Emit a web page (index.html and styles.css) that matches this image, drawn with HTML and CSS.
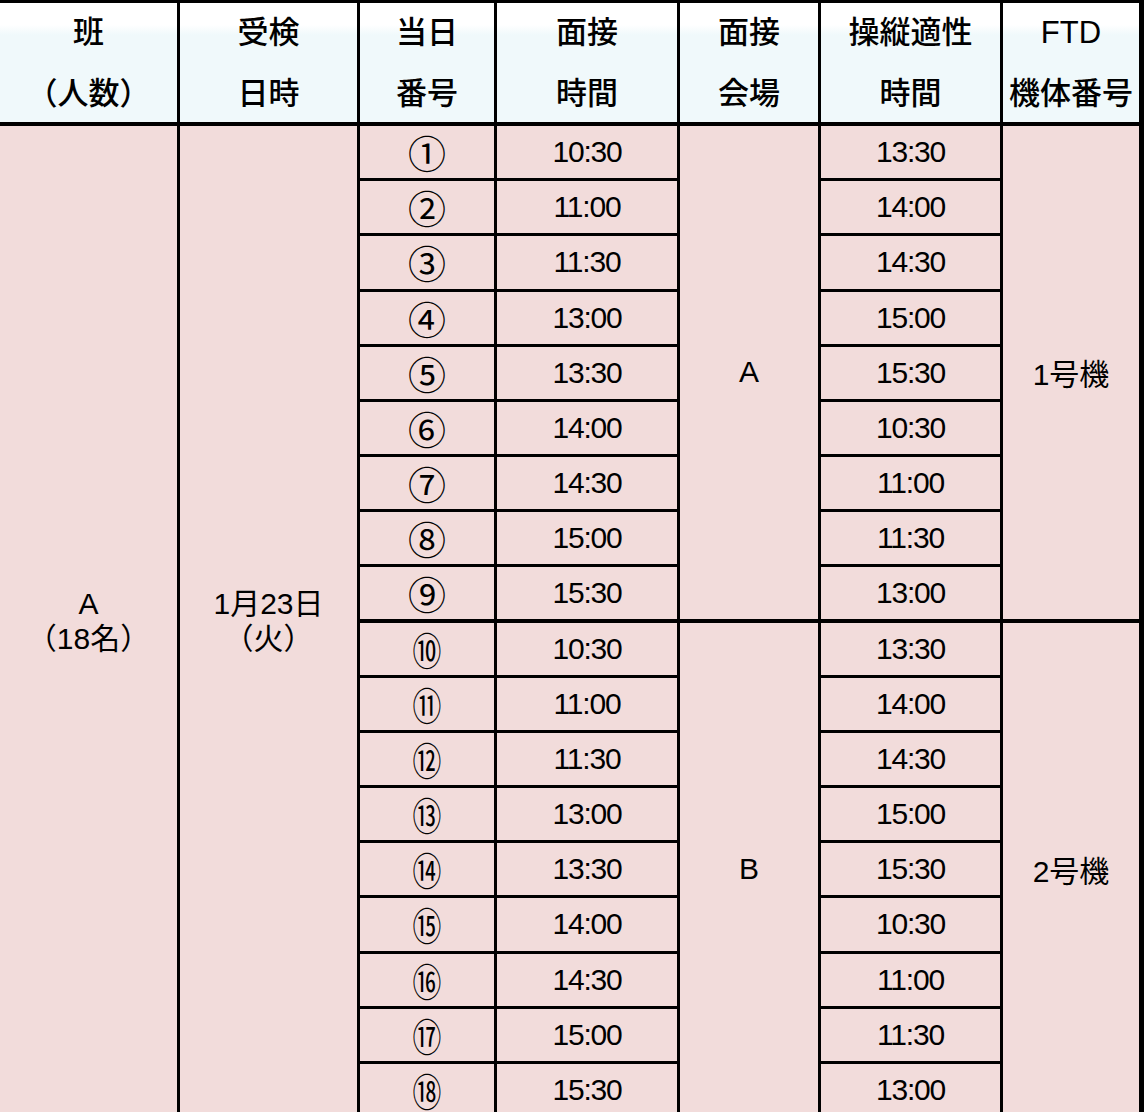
FILE: index.html
```html
<!DOCTYPE html>
<html lang="ja">
<head>
<meta charset="utf-8">
<title>受検日程</title>
<link rel="stylesheet" href="styles.css">
</head>
<body>
<div class="sheet">
  <div class="h"><div class="ln">班</div><div class="ln">（人数）</div></div>
  <div class="h"><div class="ln">受検</div><div class="ln">日時</div></div>
  <div class="h"><div class="ln">当日</div><div class="ln">番号</div></div>
  <div class="h"><div class="ln">面接</div><div class="ln">時間</div></div>
  <div class="h"><div class="ln">面接</div><div class="ln">会場</div></div>
  <div class="h"><div class="ln">操縦適性</div><div class="ln">時間</div></div>
  <div class="h last"><div class="ln">FTD</div><div class="ln">機体番号</div></div>

  <div class="grp grp-team"><div class="ml">A</div><div class="ml">（18名）</div></div>
  <div class="grp grp-date"><div class="ml">1月23日</div><div class="ml">（火）</div></div>
  <div class="grp grp-roomA sep">A</div>
  <div class="grp grp-ftd1 sep last">1号機</div>
  <div class="grp grp-roomB">B</div>
  <div class="grp grp-ftd2 last">2号機</div>

  <div class="c no"><span class="cn">①</span></div><div class="c iv">10:30</div><div class="c op">13:30</div>
  <div class="c no"><span class="cn">②</span></div><div class="c iv">11:00</div><div class="c op">14:00</div>
  <div class="c no"><span class="cn">③</span></div><div class="c iv">11:30</div><div class="c op">14:30</div>
  <div class="c no"><span class="cn">④</span></div><div class="c iv">13:00</div><div class="c op">15:00</div>
  <div class="c no"><span class="cn">⑤</span></div><div class="c iv">13:30</div><div class="c op">15:30</div>
  <div class="c no"><span class="cn">⑥</span></div><div class="c iv">14:00</div><div class="c op">10:30</div>
  <div class="c no"><span class="cn">⑦</span></div><div class="c iv">14:30</div><div class="c op">11:00</div>
  <div class="c no"><span class="cn">⑧</span></div><div class="c iv">15:00</div><div class="c op">11:30</div>
  <div class="c no sep"><span class="cn">⑨</span></div><div class="c iv sep">15:30</div><div class="c op sep">13:00</div>
  <div class="c no"><span class="cn cn2">⑩</span></div><div class="c iv">10:30</div><div class="c op">13:30</div>
  <div class="c no"><span class="cn cn2">⑪</span></div><div class="c iv">11:00</div><div class="c op">14:00</div>
  <div class="c no"><span class="cn cn2">⑫</span></div><div class="c iv">11:30</div><div class="c op">14:30</div>
  <div class="c no"><span class="cn cn2">⑬</span></div><div class="c iv">13:00</div><div class="c op">15:00</div>
  <div class="c no"><span class="cn cn2">⑭</span></div><div class="c iv">13:30</div><div class="c op">15:30</div>
  <div class="c no"><span class="cn cn2">⑮</span></div><div class="c iv">14:00</div><div class="c op">10:30</div>
  <div class="c no"><span class="cn cn2">⑯</span></div><div class="c iv">14:30</div><div class="c op">11:00</div>
  <div class="c no"><span class="cn cn2">⑰</span></div><div class="c iv">15:00</div><div class="c op">11:30</div>
  <div class="c no"><span class="cn cn2">⑱</span></div><div class="c iv">15:30</div><div class="c op">13:00</div>
</div>
</body>
</html>
```

FILE: styles.css
```css
html, body {
  margin: 0;
  padding: 0;
  overflow: hidden;
  background: #f2dcdb;
}

.sheet {
  width: 1144px;
  display: grid;
  grid-template-columns: 180px 180px 137px 183px 141px 182px 141px;
  grid-template-rows: 123px repeat(18, 55.18px);
  border-top: 3px solid #000;
  font-family: "Liberation Sans", "Noto Sans CJK JP", sans-serif;
  font-size: 30px;
  color: #000;
  background: #f2dcdb;
}

.sheet > div {
  box-sizing: border-box;
  border-right: 3px solid #000;
  border-bottom: 3px solid #000;
  display: flex;
  align-items: center;
  justify-content: center;
  text-align: center;
}

.sheet > .last {
  border-right-width: 5px;
}

.h {
  grid-row: 1;
  flex-direction: column;
  border-bottom-width: 4px !important;
  background: linear-gradient(#ffffff 0, #ffffff 22px, #f0f9fb 32px, #f0f9fb 100%);
  font-size: 31px;
  font-weight: 500;
}

.h .ln {
  line-height: 61px;
  white-space: nowrap;
}

.grp {
  flex-direction: column;
  background: #f2dcdb;
}

.grp .ml {
  line-height: 35px;
}

.grp-team { grid-column: 1; grid-row: 2 / span 18; }
.grp-date { grid-column: 2; grid-row: 2 / span 18; }
.grp-roomA { grid-column: 5; grid-row: 2 / span 9; }
.grp-ftd1 { grid-column: 7; grid-row: 2 / span 9; }
.grp-roomB { grid-column: 5; grid-row: 11 / span 9; }
.grp-ftd2 { grid-column: 7; grid-row: 11 / span 9; }

.sheet > .sep {
  border-bottom-width: 4px;
}

.c {
  background: #f2dcdb;
  letter-spacing: -1.2px;
}

.no { grid-column: 3; }
.iv { grid-column: 4; }
.op { grid-column: 6; }

.cn {
  display: inline-block;
  font-family: "Noto Sans CJK JP", sans-serif;
  font-size: 38px;
  font-weight: 400;
  line-height: 1;
  letter-spacing: 0;
}

.cn2 {
  transform: scaleX(0.76);
}
```
